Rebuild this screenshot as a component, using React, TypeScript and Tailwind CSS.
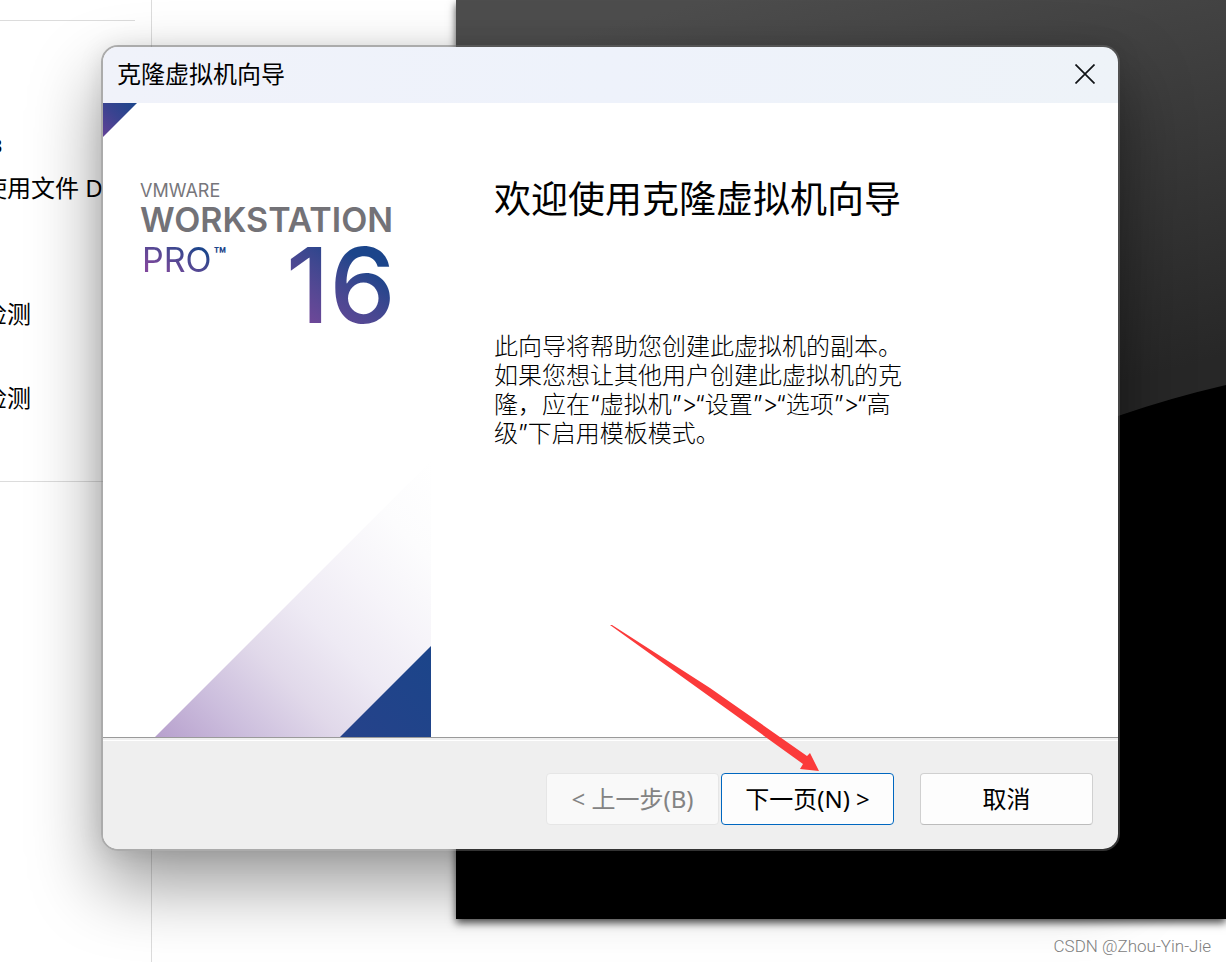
import React from 'react';

const description = [
  '此向导将帮助您创建此虚拟机的副本。',
  '如果您想让其他用户创建此虚拟机的克',
  '隆，应在“虚拟机”>“设置”>“选项”>“高',
  '级”下启用模板模式。',
];

function DeviceList() {
  return (
    <aside className="flex w-[152px] shrink-0 flex-col border-r border-[#dcdcdc] text-2xl whitespace-nowrap text-black">
      <div className="mr-4 h-[21px] border-b border-[#dcdcdc]" />
      <ul className="mr-4 -ml-[17px] h-[461px] border-b border-[#dcdcdc] pt-[109px] leading-8">
        <li className="h-[42px] pl-[6px] text-xl leading-8 font-bold">B</li>
        <li className="h-[126px]">使用文件 D</li>
        <li className="h-[84px]">检测</li>
        <li>检测</li>
      </ul>
    </aside>
  );
}

function GuestScreen() {
  return (
    <div className="h-[919px] bg-black shadow-[0_4px_8px_rgba(0,0,0,0.7)]">
      <svg className="h-full w-full" viewBox="0 0 770 919" preserveAspectRatio="xMaxYMin slice" aria-hidden="true">
        <defs>
          <linearGradient id="screen" gradientUnits="userSpaceOnUse" x1="250" y1="0" x2="370" y2="460">
            <stop offset="0" stopColor="#4d4d4d" />
            <stop offset="1" stopColor="#272727" />
          </linearGradient>
        </defs>
        <rect width="770" height="919" fill="url(#screen)" />
        <path d="M0 919V800Q400 505 662 416Q714 398 770 385V919Z" fill="#000" />
      </svg>
    </div>
  );
}

function SideBanner() {
  return (
    <div className="relative w-[328px] shrink-0 pt-[78px] pl-[37px] font-['Inter',sans-serif]">
      <svg className="absolute top-0 left-0" width="34" height="34" aria-hidden="true">
        <defs>
          <linearGradient id="corner" x1="0" y1="1" x2="1" y2="0">
            <stop offset="0" stopColor="#624296" />
            <stop offset="0.5" stopColor="#3a4390" />
            <stop offset="1" stopColor="#1b458b" />
          </linearGradient>
        </defs>
        <path d="M0 0H34L0 34Z" fill="url(#corner)" />
      </svg>
      <svg className="absolute right-0 bottom-0" width="276" height="276" aria-hidden="true">
        <defs>
          <linearGradient id="fade" x1="0" y1="1" x2="1" y2="0">
            <stop offset="0" stopColor="#b7a0cd" />
            <stop offset="0.17" stopColor="#ccbedd" />
            <stop offset="0.34" stopColor="#e1d9ea" />
            <stop offset="0.5" stopColor="#eeeaf4" />
            <stop offset="0.66" stopColor="#f6f4f9" />
            <stop offset="0.82" stopColor="#fcfcfd" />
            <stop offset="1" stopColor="#fff" />
          </linearGradient>
          <linearGradient id="wedge" x1="0" y1="1" x2="1" y2="0">
            <stop offset="0" stopColor="#26428a" />
            <stop offset="1" stopColor="#1b458a" />
          </linearGradient>
        </defs>
        <path d="M0 276L276 0V276Z" fill="url(#fade)" />
        <path d="M185 276L276 185V276Z" fill="url(#wedge)" />
      </svg>
      <p className="text-lg leading-5 text-[#77767b]">VMWARE</p>
      <p className="text-[34px] leading-[38px] font-semibold text-[#737277]">WORKSTATION</p>
      <div className="mt-[2px] flex items-start">
        <p className="ml-[2px] flex w-[144px] items-start">
          <span className="bg-linear-to-tr from-[#7f479c] from-20% to-[#1d458b] to-80% bg-clip-text text-[34px] leading-[38px] text-transparent">
            PRO
          </span>
          <span className="ml-[2px] text-xl leading-7 font-bold text-[#1d458b]">™</span>
        </p>
        <p className="mt-[5px] bg-linear-to-tr from-[#7a479b] to-[#1b458b] to-75% bg-clip-text text-[105px] leading-[78px] font-medium text-transparent">
          16
        </p>
      </div>
    </div>
  );
}

function Arrow() {
  return (
    <svg className="pointer-events-none absolute right-[75px] bottom-[54px]" width="209" height="146" aria-hidden="true">
      <path d="M0 0L2 0L100 63L197 131L200 128L209 146L190 144L193 139L96 69Z" fill="#fb3a3a" />
    </svg>
  );
}

const buttonClass = 'h-[52px] w-[173px] rounded border bg-[#fdfdfd] text-2xl text-black';

function CloneWizard() {
  return (
    <section
      role="dialog"
      aria-labelledby="wizard-title"
      className="flex-1 rounded-[17px] border-2 border-[#606060]/53 bg-clip-padding shadow-[0_34px_70px_rgba(0,0,0,0.4),0_2px_24px_rgba(0,0,0,0.1)]"
    >
      <header className="flex h-14 items-center justify-between rounded-t-[15px] bg-linear-to-r from-[#f0f2fa] via-[#eef2fb] to-[#eef3f8] pr-[13px] pb-[2px] pl-[14px]">
        <h1 id="wizard-title" className="text-2xl leading-8 text-black">克隆虚拟机向导</h1>
        <button type="button" aria-label="关闭" className="flex size-10 items-center justify-center">
          <svg width="20" height="20" viewBox="0 0 20 20" stroke="#101316" strokeWidth="1.7" aria-hidden="true">
            <path d="M0.5 0.5L19.5 19.5M19.5 0.5L0.5 19.5" />
          </svg>
        </button>
      </header>
      <div className="flex min-h-[634px] bg-white">
        <SideBanner />
        <div className="flex-1 pt-[72px] pl-[63px] text-black">
          <h2 className="text-[37px] leading-[48px]">欢迎使用克隆虚拟机向导</h2>
          <p className="mt-[109px] font-['Inter','Noto_Sans_CJK_SC',sans-serif] text-2xl leading-[29px] font-light whitespace-pre">
            {description.join('\n')}
          </p>
        </div>
      </div>
      <footer className="rounded-b-[15px] border-t border-[#9a9a9a] bg-[#efefef] pt-[2px]">
        <div className="flex justify-end border-t border-white pt-8 pr-[25px] pb-6">
          <button type="button" disabled className="h-[52px] w-[173px] rounded border border-[#e6e6e6] bg-[#f9f9f9] text-2xl text-[#838383]">
            &lt; 上一步(B)
          </button>
          <div className="relative ml-[2px]">
            <button type="button" className={`${buttonClass} border-[#0067c0]`}>
              下一页(N) &gt;
            </button>
            <Arrow />
          </div>
          <button type="button" className={`${buttonClass} ml-[26px] border-[#d0d0d0] border-b-[#bcbcbc]`}>
            取消
          </button>
        </div>
      </footer>
    </section>
  );
}

export default function App() {
  return (
    <main className="relative flex min-h-screen overflow-hidden bg-white font-['Noto_Sans','Noto_Sans_CJK_SC',sans-serif]">
      <DeviceList />
      <div className="flex-1 pl-[304px]">
        <GuestScreen />
      </div>
      <div className="absolute inset-x-0 top-[45px] flex pr-[106px] pl-[101px]">
        <CloneWizard />
      </div>
      <p className="absolute right-[15px] bottom-1 font-['Roboto',sans-serif] text-[17px] leading-6 font-light text-[#808080] [text-shadow:1px_1px_0_#fff]">
        CSDN @Zhou-Yin-Jie
      </p>
    </main>
  );
}
